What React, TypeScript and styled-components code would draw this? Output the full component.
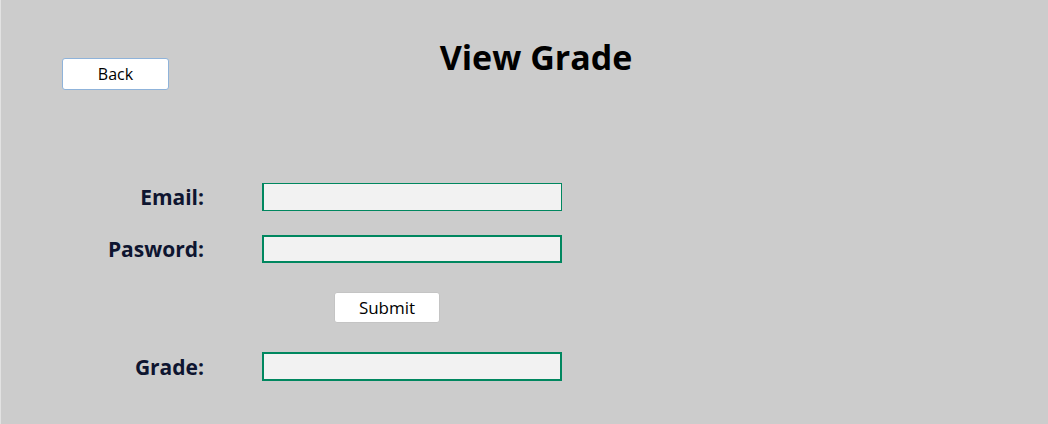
import React from "react";
import styled, { createGlobalStyle } from "styled-components";

const Global = createGlobalStyle`
  html, body { margin: 0; padding: 0; }
  body {
    background: #cccccc;
    font-family: "Open Sans", "Noto Sans", sans-serif;
  }
`;

const Page = styled.div`
  width: 1048px;
  height: 424px;
  box-sizing: border-box;
  background: #cccccc;
  border-left: 1px solid #e2e2e2;
  overflow: hidden;
`;

const Header = styled.header`
  display: grid;
  grid-template-columns: 1fr auto 1fr;
  align-items: start;
  padding: 0 0 0 23px;
`;

const Title = styled.h1`
  margin: 34px 0 0;
  font-size: 34px;
  line-height: 46px;
  font-weight: 700;
  color: #000;
`;

const Button = styled.button`
  box-sizing: border-box;
  width: 106px;
  height: 31px;
  padding: 0;
  background: #fff;
  border: 1px solid #c4c4c4;
  border-radius: 3px;
  font-family: "Open Sans", "Noto Sans", sans-serif;
  font-size: 17px;
  color: #000;
  cursor: pointer;
`;

const BackButton = styled(Button)`
  justify-self: start;
  grid-column: 1;
  margin: 58px 0 0 38px;
  width: 107px;
  height: 32px;
  font-size: 16px;
  border-color: #8fb3da;
`;

const Form = styled.form`
  display: grid;
  grid-template-columns: 203px 300px;
  column-gap: 58px;
  margin-top: 93px;
  align-items: center;
`;

const Label = styled.label`
  justify-self: end;
  font-size: 21px;
  font-weight: 700;
  color: #0e1530;
`;

const Input = styled.input<{ $thin?: boolean; $tall?: boolean }>`
  box-sizing: border-box;
  width: 300px;
  height: ${(p) => (p.$tall ? 29 : 28)}px;
  margin: 0;
  background: #f2f2f2;
  border: ${(p) => (p.$thin ? "1px" : "2px")} solid #00875f;
  border-left-width: 2px;
  outline: none;
`;

const Row = styled.div<{ $gap: number }>`
  display: contents;
  & > * {
    margin-top: ${(p) => p.$gap}px;
  }
`;

const SubmitCell = styled.div`
  grid-column: 1 / span 2;
  display: flex;
  justify-content: flex-start;
  padding-left: 333px;
`;

export default function App() {
  return (
    <Page>
      <Global />
      <Header>
        <BackButton type="button">Back</BackButton>
        <Title>View Grade</Title>
      </Header>
      <Form onSubmit={(e) => e.preventDefault()}>
        <Row $gap={0}>
          <Label>Email:</Label>
          <Input $thin />
        </Row>
        <Row $gap={24}>
          <Label>Pasword:</Label>
          <Input />
        </Row>
        <Row $gap={29}>
          <SubmitCell>
            <Button type="submit">Submit</Button>
          </SubmitCell>
        </Row>
        <Row $gap={29}>
          <Label>Grade:</Label>
          <Input $tall />
        </Row>
      </Form>
    </Page>
  );
}
